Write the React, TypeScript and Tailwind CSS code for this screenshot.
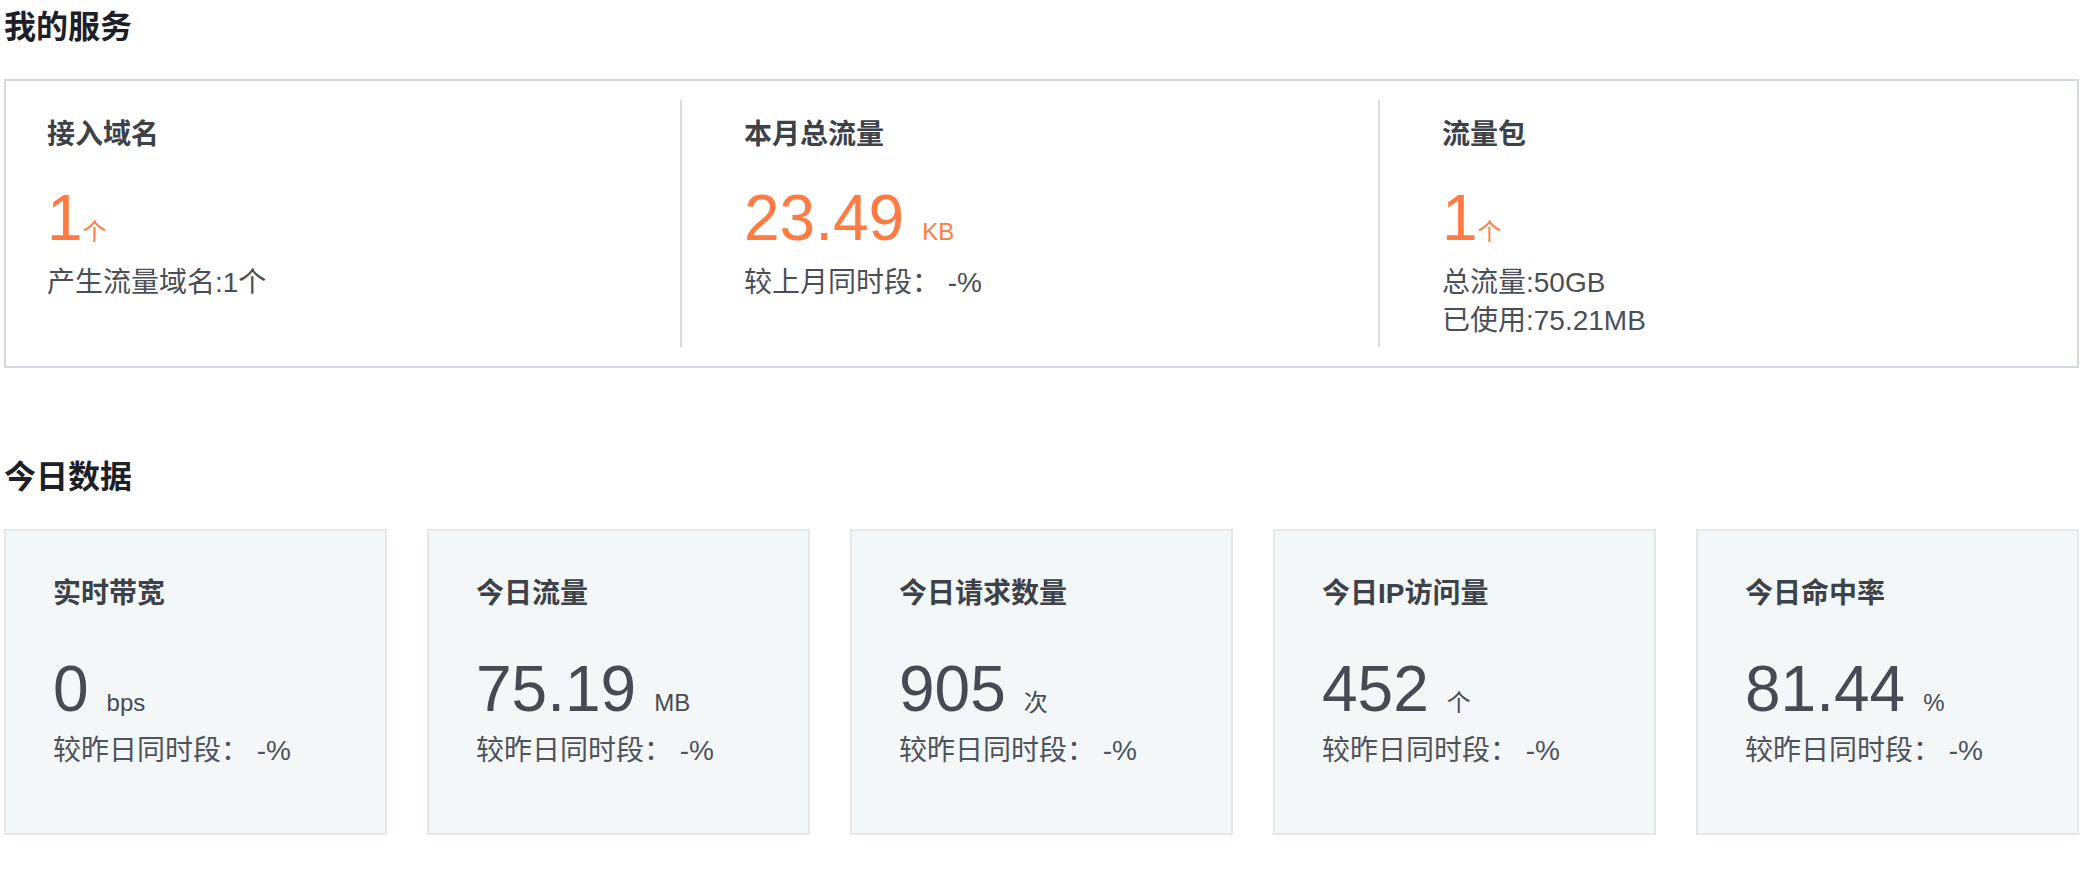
const services = [
  { title: "接入域名", value: "1", unit: "个", spaced: false, lines: ["产生流量域名:1个"] },
  { title: "本月总流量", value: "23.49", unit: "KB", spaced: true, lines: ["较上月同时段： -%"] },
  { title: "流量包", value: "1", unit: "个", spaced: false, lines: ["总流量:50GB", "已使用:75.21MB"] },
];

const today = [
  { title: "实时带宽", value: "0", unit: "bps" },
  { title: "今日流量", value: "75.19", unit: "MB" },
  { title: "今日请求数量", value: "905", unit: "次" },
  { title: "今日IP访问量", value: "452", unit: "个" },
  { title: "今日命中率", value: "81.44", unit: "%" },
];

function ServiceCol({ item }: { item: (typeof services)[number] }) {
  return (
    <div className="pt-[15px] pb-[7px]">
      <h4 className="h-[40px] text-[28px] leading-[40px] font-bold text-[#3d4249]">{item.title}</h4>
      <div className="mt-[31px] flex items-baseline text-[#ff7b43]">
        <span className="text-[64px] leading-none">{item.value}</span>
        <span className={`text-[24px] leading-none ${item.spaced ? "ml-[18px]" : ""}`}>{item.unit}</span>
      </div>
      <div className="mt-[14px] text-[28px] leading-[38px] text-[#4a4f57]">
        {item.lines.map((l) => (
          <p key={l}>{l}</p>
        ))}
      </div>
    </div>
  );
}

export default function App() {
  return (
    <div className="min-h-screen bg-white pl-[4px] pr-[15px] font-['Liberation_Sans','Noto_Sans_CJK_SC',sans-serif]">
      {/* 我的服务 */}
      <h2 className="h-[55px] text-[32px] leading-[55px] font-bold text-[#1d2026]">我的服务</h2>
      <div className="mt-[24px] flex border-2 border-[#d5d8df] py-[19px]">
        <div className="w-[674px] shrink-0 pl-[41px]">
          <ServiceCol item={services[0]} />
        </div>
        <div className="w-[2px] shrink-0 bg-[#d8dbe2]" />
        <div className="w-[696px] shrink-0 pl-[62px]">
          <ServiceCol item={services[1]} />
        </div>
        <div className="w-[2px] shrink-0 bg-[#d8dbe2]" />
        <div className="flex-1 pl-[62px]">
          <ServiceCol item={services[2]} />
        </div>
      </div>

      {/* 今日数据 */}
      <h2 className="mt-[82px] h-[55px] text-[32px] leading-[55px] font-bold text-[#1d2026]">今日数据</h2>
      <div className="mt-[24px] grid grid-cols-5 gap-[40px]">
        {today.map((c) => (
          <div key={c.title} className="h-[306px] border-2 border-[#e5e7e9] bg-[#f4f7f8] pt-[43px] pl-[47px]">
            <h4 className="h-[40px] text-[28px] leading-[40px] font-bold text-[#3d4249]">{c.title}</h4>
            <div className="mt-[43px] flex items-baseline text-[#464b53]">
              <span className="text-[64px] leading-none">{c.value}</span>
              <span className="ml-[18px] text-[24px] leading-none">{c.unit}</span>
            </div>
            <p className="mt-[11px] text-[28px] leading-[38px] text-[#4e535b]">较昨日同时段： -%</p>
          </div>
        ))}
      </div>
    </div>
  );
}
